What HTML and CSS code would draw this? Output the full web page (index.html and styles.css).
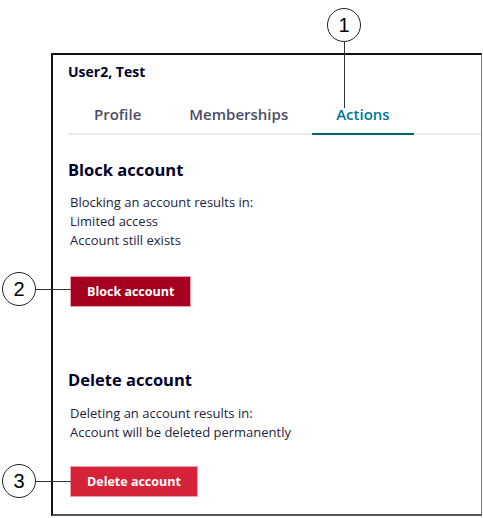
FILE: index.html
```html
<!DOCTYPE html>
<html lang="en">

<head>
    <meta charset="UTF-8">
    <title>User details - Actions</title>
    <link rel="stylesheet" href="styles.css">
</head>

<body>
    <div class="page">
        <div class="panel">
            <div class="user-name">User2, Test</div>

            <div class="tabs">
                <div class="tab">Profile</div>
                <div class="tab">Memberships</div>
                <div class="tab active">Actions</div>
            </div>

            <section class="action">
                <h2>Block account</h2>
                <p>Blocking an account results in:<br>Limited access<br>Account still exists</p>
                <button class="btn btn-block">Block account</button>
            </section>

            <section class="action action-delete">
                <h2>Delete account</h2>
                <p>Deleting an account results in:<br>Account will be deleted permanently</p>
                <button class="btn btn-delete">Delete account</button>
            </section>
        </div>

        <!-- numbered callouts -->
        <div class="callout callout-1">
            <span class="bubble">1</span>
            <span class="leader leader-down"></span>
        </div>
        <div class="callout callout-2">
            <span class="bubble">2</span>
            <span class="leader leader-right"></span>
        </div>
        <div class="callout callout-3">
            <span class="bubble">3</span>
            <span class="leader leader-right"></span>
        </div>
    </div>
</body>

</html>
```

FILE: styles.css
```css
html,
body {
    overflow: hidden;
}

body {
    margin: 0;
    padding: 0;
    background-color: #fff;
    font-family: "Open Sans", "Noto Sans", sans-serif;
}

.page {
    position: relative;
    width: 483px;
    height: 518px;
    padding: 53px 0 0 51px;
    box-sizing: border-box;
}

.panel {
    width: 431px;
    height: 463px;
    box-sizing: border-box;
    border-top: 2px solid #111;
    border-left: 2px solid #111;
    border-right: 1px solid #7a7a7a;
    border-bottom: 2px solid #555;
    padding: 7px 0 0 15px;
}

.user-name {
    font-size: 14px;
    font-weight: 700;
    color: #000028;
    line-height: 20px;
}

.tabs {
    display: flex;
    margin-top: 17px;
    border-bottom: 2px solid #ebebee;
}

.tab {
    padding: 5px 24px 9px;
    font-size: 15px;
    font-weight: 600;
    color: #4c4c68;
    line-height: 20px;
    margin-bottom: -2px;
    border-bottom: 2px solid transparent;
}

.tab:first-child {
    margin-left: 2px;
}

.tab.active {
    color: #007993;
    border-bottom-color: #00646e;
}

.action h2 {
    margin: 24px 0 0 0;
    font-size: 16.5px;
    font-weight: 700;
    color: #000028;
    line-height: 22px;
}

.action p {
    margin: 12px 0 0 2px;
    font-size: 13px;
    color: #23233c;
    line-height: 19px;
}

.btn {
    display: block;
    margin: 26px 0 0 2px;
    height: 31px;
    padding: 0 16px;
    border: 1px solid #f0a0b0;
    font-family: inherit;
    font-size: 12.5px;
    font-weight: 700;
    color: #fff;
    cursor: pointer;
}

.btn-block {
    background-color: #a5001f;
}

.btn-delete {
    background-color: #d72339;
}

.action-delete h2 {
    margin-top: 62px;
}

.action-delete p {
    margin-top: 13px;
}

.action-delete .btn {
    margin-top: 24px;
}

/* callouts sit on top of the panel */
.callout {
    position: absolute;
}

.bubble {
    position: absolute;
    left: 0;
    top: 0;
    width: 34px;
    height: 34px;
    border: 1px solid #222;
    border-radius: 50%;
    background: #fff;
    box-sizing: border-box;
    font-family: "Liberation Sans", sans-serif;
    font-size: 20px;
    line-height: 32px;
    text-align: center;
    color: #000;
}

.leader {
    position: absolute;
    background: #333;
}

.leader-down {
    left: 17px;
    top: 34px;
    width: 1px;
    height: 66px;
}

.leader-right {
    left: 34px;
    top: 17px;
    width: 35px;
    height: 1px;
}

.callout-1 {
    left: 327px;
    top: 8px;
}

.callout-2 {
    left: 2px;
    top: 272px;
}

.callout-3 {
    left: 2px;
    top: 464px;
}
```
